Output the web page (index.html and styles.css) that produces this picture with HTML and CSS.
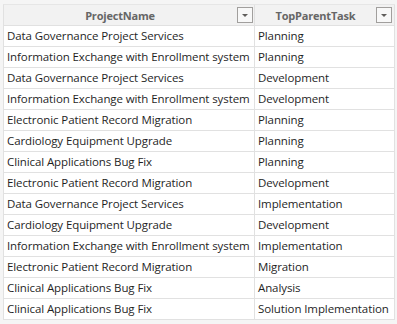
FILE: index.html
```html
<!DOCTYPE html>
<html>
<head>
<meta charset="utf-8">
<link rel="stylesheet" href="styles.css">
</head>
<body>
<div class="frame">
  <div class="table">
    <div class="hcell c1"><span class="htext">ProjectName</span><span class="filter"></span></div>
    <div class="hcell c2"><span class="htext">TopParentTask</span><span class="filter"></span></div>

    <div class="cell c1">Data Governance Project Services</div><div class="cell c2">Planning</div>
    <div class="cell c1">Information Exchange with Enrollment system</div><div class="cell c2">Planning</div>
    <div class="cell c1">Data Governance Project Services</div><div class="cell c2">Development</div>
    <div class="cell c1">Information Exchange with Enrollment system</div><div class="cell c2">Development</div>
    <div class="cell c1">Electronic Patient Record Migration</div><div class="cell c2">Planning</div>
    <div class="cell c1">Cardiology Equipment Upgrade</div><div class="cell c2">Planning</div>
    <div class="cell c1">Clinical Applications Bug Fix</div><div class="cell c2">Planning</div>
    <div class="cell c1">Electronic Patient Record Migration</div><div class="cell c2">Development</div>
    <div class="cell c1">Data Governance Project Services</div><div class="cell c2">Implementation</div>
    <div class="cell c1">Cardiology Equipment Upgrade</div><div class="cell c2">Development</div>
    <div class="cell c1">Information Exchange with Enrollment system</div><div class="cell c2">Implementation</div>
    <div class="cell c1">Electronic Patient Record Migration</div><div class="cell c2">Migration</div>
    <div class="cell c1">Clinical Applications Bug Fix</div><div class="cell c2">Analysis</div>
    <div class="cell c1">Clinical Applications Bug Fix</div><div class="cell c2">Solution Implementation</div>
  </div>
</div>
</body>
</html>
```

FILE: styles.css
```css
html, body {
  margin: 0;
  padding: 0;
  background: #f5f5f5;
}
.frame {
  padding: 4px 3px 0 3px;
  width: 397px;
  height: 324px;
  box-sizing: border-box;
  overflow: hidden;
}
.table {
  display: grid;
  grid-template-columns: 251px 140px;
  grid-auto-rows: 21px;
  border-left: 1px solid #e1e1e1;
  border-top: 1px solid #e6e6e6;
  font-family: "Segoe UI", "Open Sans", "Noto Sans", sans-serif;
  font-size: 11.5px;
  letter-spacing: -0.1px;
  color: #1f1f1f;
  width: max-content;
}
.hcell {
  grid-row: 1;
  height: 20px;
  background: #f2f2f2;
  border-bottom: 1px solid #e1e1e1;
  border-right: 1px solid #e1e1e1;
  position: relative;
  display: flex;
  align-items: center;
  justify-content: center;
  padding-right: 18px;
  font-weight: bold;
  font-size: 11px;
  letter-spacing: -0.2px;
  color: #666666;
}
.cell {
  background: #ffffff;
  border-bottom: 1px solid #e1e1e1;
  border-right: 1px solid #e1e1e1;
  height: 20px;
  line-height: 20px;
  padding-left: 3px;
  white-space: nowrap;
  overflow: hidden;
}
.filter {
  position: absolute;
  right: 1px;
  top: 2px;
  width: 14px;
  height: 14px;
  border: 1px solid #a19f9d;
  background: #f8f8f8;
}
.c2 .filter {
  right: 2px;
}
.filter::after {
  content: "";
  position: absolute;
  left: 4px;
  top: 6px;
  border-left: 3px solid transparent;
  border-right: 3px solid transparent;
  border-top: 3px solid #605e5c;
}
```
